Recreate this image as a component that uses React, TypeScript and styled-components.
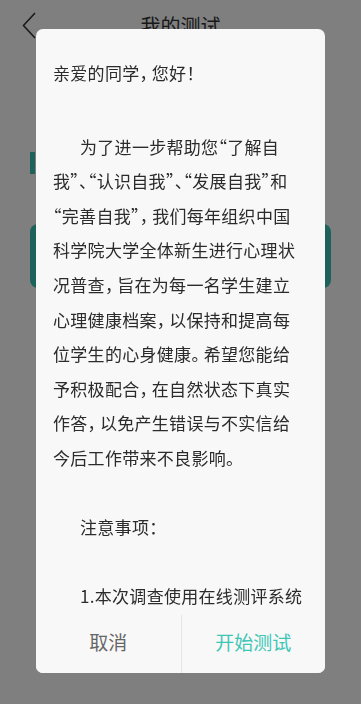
import styled, { createGlobalStyle } from 'styled-components'

const GlobalStyle = createGlobalStyle`
  html, body {
    margin: 0;
    padding: 0;
  }
  body {
    font-family: 'Noto Sans CJK SC', 'Noto Sans', sans-serif;
    background: #ffffff;
  }
`

const TEAL = '#3cc6b6'

const greeting = '亲爱的同学，您好！'

const intro = [
  '为了进一步帮助您“了解自',
  '我”、“认识自我”、“发展自我”和',
  '“完善自我”，我们每年组织中国',
  '科学院大学全体新生进行心理状',
  '况普查，旨在为每一名学生建立',
  '心理健康档案，以保持和提高每',
  '位学生的心身健康。希望您能给',
  '予积极配合，在自然状态下真实',
  '作答，以免产生错误与不实信给',
  '今后工作带来不良影响。',
]

const notes = ['注意事项：']

const items = ['1.本次调查使用在线测评系统']

// Half-width commas and stops in the source still leave a little air after them.
function withStops(text: string) {
  return text.split(/([，。])/).map((part, i) =>
    part === '，' || part === '。' ? <Stop key={i}>{part}</Stop> : part,
  )
}

export default function App() {
  return (
    <>
      <GlobalStyle />
      <Screen>
        <Header>
          <BackButton aria-label="返回">
            <svg width="14" height="27" viewBox="0 0 14 27" fill="none">
              <path d="M13 1L1.5 13.5L13 26" stroke="#333" strokeWidth="1.6" />
            </svg>
          </BackButton>
          <Title>我的测试</Title>
          <span />
        </Header>
        <Section>
          <SectionMarker />
          <TestCard />
        </Section>
      </Screen>

      <Overlay>
        <Dialog>
          <Body>
            <Greeting>{withStops(greeting)}</Greeting>
            <Paragraph>
              {intro.map((line, i) => (
                <Line key={i} $indent={i === 0}>
                  {withStops(line)}
                </Line>
              ))}
            </Paragraph>
            <Paragraph>
              {notes.map((line, i) => (
                <Line key={i} $indent>
                  {line}
                </Line>
              ))}
            </Paragraph>
            <Paragraph>
              {items.map((line, i) => (
                <Line key={i} $indent={i === 0}>
                  {line}
                </Line>
              ))}
            </Paragraph>
          </Body>
          <Footer>
            <ActionButton>取消</ActionButton>
            <ActionButton $primary>开始测试</ActionButton>
          </Footer>
        </Dialog>
      </Overlay>
    </>
  )
}

const Screen = styled.div`
  width: 361px;
  height: 704px;
  background: #ffffff;
  overflow: hidden;
`

const Header = styled.header`
  height: 50px;
  display: grid;
  grid-template-columns: 60px 1fr 60px;
  align-items: center;
`

const BackButton = styled.button`
  border: 0;
  background: none;
  padding: 0 0 0 22px;
  height: 50px;
  display: flex;
  align-items: center;
`

const Title = styled.h1`
  margin: 0;
  text-align: center;
  font-size: 20px;
  font-weight: 400;
  color: #333;
`

const Section = styled.div`
  padding: 102px 30px 0;
  display: flex;
  flex-direction: column;
  gap: 50px;
`

const SectionMarker = styled.div`
  width: 5px;
  height: 22px;
  background: ${TEAL};
`

const TestCard = styled.div`
  height: 64px;
  border-radius: 8px;
  background: ${TEAL};
`

const Overlay = styled.div`
  position: fixed;
  inset: 0;
  background: rgba(0, 0, 0, 0.5);
  display: flex;
  justify-content: center;
  align-items: flex-start;
  padding-top: 29px;
`

const Dialog = styled.div`
  width: 289px;
  height: 644px;
  background: #f8f8f8;
  border-radius: 7px;
  display: flex;
  flex-direction: column;
  overflow: hidden;
`

const Body = styled.div`
  flex: 1;
  min-height: 0;
  overflow-y: auto;
  padding: 27px 17px 0;
  color: #2b2b2b;
  font-size: 17px;
  letter-spacing: 0.3px;
  line-height: 34.6px;
  font-feature-settings: 'halt';
  scrollbar-width: none;
  &::-webkit-scrollbar {
    display: none;
  }
`

const Stop = styled.span`
  margin-right: 3.5px;
`

const Greeting = styled.p`
  margin: 0 0 39px;
  white-space: nowrap;
`

const Paragraph = styled.div`
  margin-bottom: 34.6px;
`

const Line = styled.div<{ $indent?: boolean }>`
  white-space: nowrap;
  padding-left: ${({ $indent }) => ($indent ? '27px' : '0')};
`

const Footer = styled.div`
  height: 58px;
  flex-shrink: 0;
  display: grid;
  grid-template-columns: 1fr 1fr;
  background: #f8f8f8;
`

const ActionButton = styled.button<{ $primary?: boolean }>`
  border: 0;
  background: none;
  font-family: inherit;
  font-size: 19px;
  color: ${({ $primary }) => ($primary ? TEAL : '#666')};
  border-left: ${({ $primary }) => ($primary ? '1px solid #e6e6e6' : 'none')};
  padding: 0 0 6px;
`
